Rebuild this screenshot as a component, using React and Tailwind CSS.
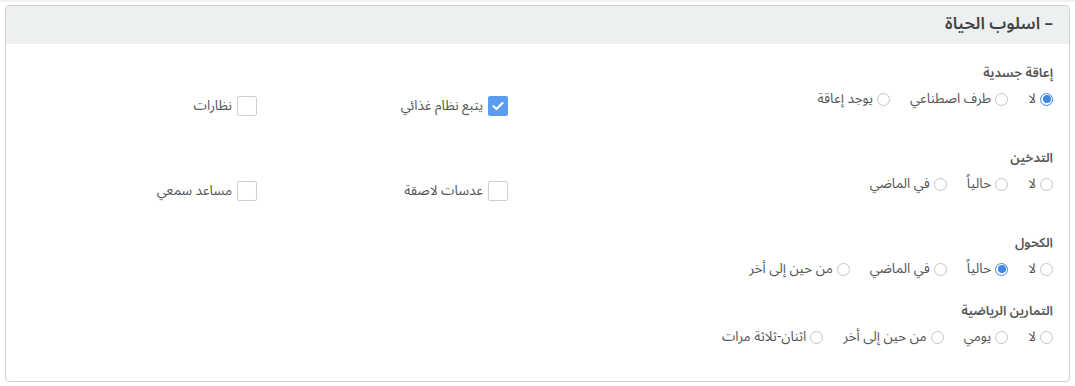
import React from "react";

const FONT = { fontFamily: '"Noto Sans Arabic", "Noto Sans", "DejaVu Sans", sans-serif' };

function Radio({ label, checked }) {
  return (
    <span className="flex items-center gap-[4px]">
      {checked ? (
        <span className="w-[13px] h-[13px] rounded-full border border-[#3f86e6] bg-white flex items-center justify-center">
          <span className="w-[8px] h-[8px] rounded-full bg-[#3f86e6]" />
        </span>
      ) : (
        <span className="w-[13px] h-[13px] rounded-full border border-[#c4c4c4] bg-white" />
      )}
      <span className="text-[13.5px] text-[#555] leading-[18px]">{label}</span>
    </span>
  );
}

function Check({ label, checked }) {
  return (
    <span className="flex items-center gap-[5px]">
      {checked ? (
        <span className="w-[20px] h-[20px] rounded-[2px] bg-[#5a9cf0] flex items-center justify-center">
          <svg width="12" height="10" viewBox="0 0 12 10">
            <path d="M1.5 5.2 L4.5 8 L10.5 2" fill="none" stroke="white" strokeWidth="2.2" strokeLinecap="round" strokeLinejoin="round" />
          </svg>
        </span>
      ) : (
        <span className="w-[20px] h-[20px] rounded-[2px] border border-[#cfcfcf] bg-white" />
      )}
      <span className="text-[13.5px] text-[#555] leading-[18px]">{label}</span>
    </span>
  );
}

function Row({ title, options, checkedIndex, checks, height }) {
  return (
    <div className="flex" style={{ height }}>
      <div className="flex-1 pr-[16px]">
        <div className="text-[13px] font-semibold text-[#555] leading-[18px]">{title}</div>
        <div className="mt-[8px] flex items-center gap-[20px] h-[18px]">
          {options.map((o, i) => (
            <Radio key={i} label={o} checked={i === checkedIndex} />
          ))}
        </div>
      </div>
      <div className="w-[251px] pt-[32px]">
        {checks && <Check label={checks[0].label} checked={checks[0].checked} />}
      </div>
      <div className="w-[251px] pt-[32px]">
        {checks && <Check label={checks[1].label} checked={checks[1].checked} />}
      </div>
    </div>
  );
}

export default function App() {
  return (
    <div dir="rtl" className="w-[1075px] h-[386px] bg-white" style={FONT}>
      <div className="h-[2px] bg-[#f2f2f2]" />
      <div className="h-[3px]" />
      <div className="mx-[5px] h-[377px] border border-[#cdd2d4] rounded-[4px] overflow-hidden">
        <div className="h-[38px] bg-[#ecf0f1] px-[16px] flex items-center text-[17px] font-semibold text-[#444]">
          – اسلوب الحياة
        </div>
        <div className="pt-[20px]">
          <Row
            title="إعاقة جسدية"
            options={["لا", "طرف اصطناعي", "يوجد إعاقة"]}
            checkedIndex={0}
            checks={[
              { label: "يتبع نظام غذائي", checked: true },
              { label: "نظارات", checked: false },
            ]}
            height={85}
          />
          <Row
            title="التدخين"
            options={["لا", "حالياً", "في الماضي"]}
            checkedIndex={-1}
            checks={[
              { label: "عدسات لاصقة", checked: false },
              { label: "مساعد سمعي", checked: false },
            ]}
            height={85}
          />
          <Row
            title="الكحول"
            options={["لا", "حالياً", "في الماضي", "من حين إلى أخر"]}
            checkedIndex={1}
            height={68}
          />
          <Row
            title="التمارين الرياضية"
            options={["لا", "يومي", "من حين إلى أخر", "اثنان-ثلاثة مرات"]}
            checkedIndex={-1}
            height={60}
          />
        </div>
      </div>
    </div>
  );
}
